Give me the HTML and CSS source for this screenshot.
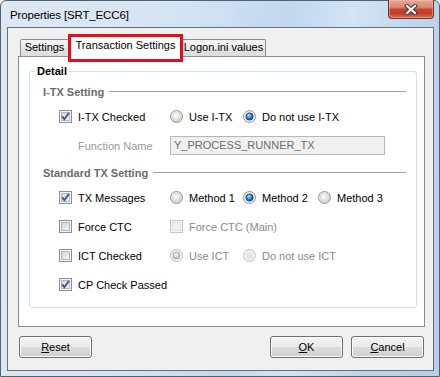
FILE: index.html
```html
<!DOCTYPE html>
<html>
<head>
<meta charset="utf-8">
<link rel="stylesheet" href="styles.css">
</head>
<body>
<svg class="defs" width="0" height="0">
  <defs>
    <linearGradient id="cbg" x1="0" y1="0" x2="1" y2="1">
      <stop offset="0" stop-color="#cdd1d7"/>
      <stop offset="1" stop-color="#f8f8f8"/>
    </linearGradient>
    <radialGradient id="rbg" cx=".4" cy=".35" r=".75">
      <stop offset="0" stop-color="#fafafa"/>
      <stop offset=".6" stop-color="#e2e2e2"/>
      <stop offset="1" stop-color="#c4c4c4"/>
    </radialGradient>
    <radialGradient id="rdot" cx=".4" cy=".35" r=".7">
      <stop offset="0" stop-color="#b9e6fb"/>
      <stop offset=".5" stop-color="#2a8ed0"/>
      <stop offset="1" stop-color="#0f4a7e"/>
    </radialGradient>
    <radialGradient id="rdotdis" cx=".4" cy=".35" r=".7">
      <stop offset="0" stop-color="#f2f2f2"/>
      <stop offset="1" stop-color="#b8b8b8"/>
    </radialGradient>
    <symbol id="cb" viewBox="0 0 13 13">
      <rect x=".5" y=".5" width="12" height="12" fill="#f6f6f6" stroke="#8e8f8f"/>
      <rect x="2.5" y="2.5" width="8" height="8" fill="url(#cbg)" stroke="#b3b7bd"/>
    </symbol>
    <symbol id="cbon" viewBox="0 0 13 13">
      <rect x=".5" y=".5" width="12" height="12" fill="#f6f6f6" stroke="#8e8f8f"/>
      <rect x="2.5" y="2.5" width="8" height="8" fill="url(#cbg)" stroke="#b3b7bd"/>
      <path d="M3.2 6.4 L5.4 9.3 L9.8 2.9" fill="none" stroke="#40558f" stroke-width="1.8"/>
    </symbol>
    <symbol id="cbdis" viewBox="0 0 13 13">
      <rect x=".5" y=".5" width="12" height="12" fill="#f4f4f4" stroke="#c6c6c6"/>
      <rect x="2.5" y="2.5" width="8" height="8" fill="#f0f0f0" stroke="#e0e0e0"/>
    </symbol>
    <symbol id="rb" viewBox="0 0 13 13">
      <circle cx="6.5" cy="6.5" r="6" fill="url(#rbg)" stroke="#979797"/>
      <circle cx="6.5" cy="6.5" r="4" fill="none" stroke="#d0d0d0" stroke-width=".8"/>
    </symbol>
    <symbol id="rbon" viewBox="0 0 13 13">
      <circle cx="6.5" cy="6.5" r="6" fill="#ececec" stroke="#979797"/>
      <circle cx="6.5" cy="6.5" r="3.6" fill="url(#rdot)" stroke="#1e3f63" stroke-width=".9"/>
    </symbol>
    <symbol id="rbdison" viewBox="0 0 13 13">
      <circle cx="6.5" cy="6.5" r="6" fill="#f1f1f1" stroke="#bdbdbd"/>
      <circle cx="6.5" cy="6.5" r="3.5" fill="url(#rdotdis)" stroke="#a5a5a5" stroke-width=".9"/>
    </symbol>
    <symbol id="rbdis" viewBox="0 0 13 13">
      <circle cx="6.5" cy="6.5" r="6" fill="#f3f3f3" stroke="#c4c4c4"/>
      <circle cx="6.5" cy="6.5" r="3.8" fill="#e6e6e6"/>
    </symbol>
  </defs>
</svg>

<div class="window">
  <div class="titlebar">
    <span class="title">Properties [SRT_ECC6]</span>
    <div class="close">
      <svg width="14" height="11" viewBox="0 0 14 11">
        <path d="M3 2 L11 9 M11 2 L3 9" stroke="#3b3b3b" stroke-width="4.2" stroke-linecap="square" fill="none"/>
        <path d="M3 2 L11 9 M11 2 L3 9" stroke="#ffffff" stroke-width="2.2" stroke-linecap="square" fill="none"/>
      </svg>
    </div>
  </div>

  <div class="client">
    <div class="tabs">
      <div class="tab t-settings">Settings</div>
      <div class="tab active">Transaction Settings</div>
      <div class="tab t-logon">Logon.ini values</div>
    </div>

    <div class="panel">
      <fieldset class="group">
        <legend>Detail</legend>

        <div class="section"><span>I-TX Setting</span><i class="rule"></i></div>
        <div class="row">
          <label class="cell c1"><svg class="ctl"><use href="#cbon"/></svg>I-TX Checked</label>
          <label class="cell c2"><svg class="ctl"><use href="#rb"/></svg>Use I-TX</label>
          <label class="cell"><svg class="ctl"><use href="#rbon"/></svg>Do not use I-TX</label>
        </div>
        <div class="row">
          <span class="cell c1 fname">Function Name</span>
          <div class="textbox">Y_PROCESS_RUNNER_TX</div>
        </div>

        <div class="section s2"><span>Standard TX Setting</span><i class="rule"></i></div>
        <div class="row">
          <label class="cell c1"><svg class="ctl"><use href="#cbon"/></svg>TX Messages</label>
          <label class="cell c2"><svg class="ctl"><use href="#rb"/></svg>Method 1</label>
          <label class="cell c3"><svg class="ctl"><use href="#rbon"/></svg>Method 2</label>
          <label class="cell"><svg class="ctl"><use href="#rb"/></svg>Method 3</label>
        </div>
        <div class="row">
          <label class="cell c1"><svg class="ctl"><use href="#cb"/></svg>Force CTC</label>
          <label class="cell dis"><svg class="ctl"><use href="#cbdis"/></svg>Force CTC (Main)</label>
        </div>
        <div class="row">
          <label class="cell c1"><svg class="ctl"><use href="#cb"/></svg>ICT Checked</label>
          <label class="cell c2 dis"><svg class="ctl"><use href="#rbdison"/></svg>Use ICT</label>
          <label class="cell dis"><svg class="ctl"><use href="#rbdis"/></svg>Do not use ICT</label>
        </div>
        <div class="row">
          <label class="cell c1 wide"><svg class="ctl"><use href="#cbon"/></svg>CP Check Passed</label>
        </div>
      </fieldset>
    </div>

    <div class="buttons">
      <button class="btn reset"><u>R</u>eset</button>
      <button class="btn"><u>O</u>K</button>
      <button class="btn"><u>C</u>ancel</button>
    </div>
  </div>
</div>
</body>
</html>
```

FILE: styles.css
```css
* { box-sizing: border-box; }

html, body {
  margin: 0;
  padding: 0;
  background: #ffffff;
}

body {
  font-family: "Liberation Sans", Arial, sans-serif;
  font-size: 11px;
  color: #000;
  width: 440px;
  height: 377px;
  overflow: hidden;
}

.defs {
  position: absolute;
  width: 0;
  height: 0;
}

.window {
  width: 440px;
  height: 377px;
  border: 1px solid #55616e;
  border-radius: 6px 6px 0 0;
  background: linear-gradient(100deg, #dde8f4 0%, #d5e4f3 35%, #c2d8ef 58%, #d3e3f4 70%, #bcd3ec 86%, #b7cfea 100%);
  padding: 0 5px 5px 6px;
  display: flex;
  flex-direction: column;
}

.titlebar {
  height: 26px;
  display: flex;
  align-items: flex-start;
  flex: none;
}

.title {
  padding-left: 3px;
  margin-top: 7px;
  line-height: 14px;
  font-size: 11.5px;
  letter-spacing: -0.15px;
  color: #000;
}

.close {
  margin-left: auto;
  margin-top: -1px;
  width: 46px;
  height: 19px;
  border: 1px solid #6e3128;
  border-top: none;
  border-radius: 0 0 4px 4px;
  background: linear-gradient(#e7a695 0%, #d98a76 40%, #c7432c 52%, #c53c27 75%, #e06b50 100%);
  box-shadow: inset 0 0 0 1px rgba(255, 200, 190, 0.45);
  display: flex;
  align-items: center;
  justify-content: center;
}

.client {
  flex: 1;
  background: #f0f0f0;
  border: 1px solid #66717e;
  padding: 8px 8px 0 10px;
  display: flex;
  flex-direction: column;
}

/* Tabs */
.tabs {
  display: flex;
  align-items: flex-end;
  height: 20px;
  padding-left: 2px;
  flex: none;
}

.tab {
  height: 17px;
  line-height: 15px;
  border: 1px solid #898c95;
  border-bottom: none;
  border-radius: 2px 2px 0 0;
  background: linear-gradient(#f4f4f4, #ececec 50%, #e4e4e4 50%, #dcdcdc);
  text-align: center;
  white-space: nowrap;
}

.t-settings { width: 49px; }
.t-logon { width: 85px; }

.tab.active {
  position: relative;
  z-index: 2;
  width: 111px;
  height: 21px;
  line-height: 17px;
  margin-left: 1px;
  margin-bottom: -1px;
  background: #ffffff;
}

.tab.active::after {
  content: "";
  position: absolute;
  left: -3px;
  right: -3px;
  top: -3px;
  bottom: -5px;
  border: 3px solid #e3101a;
}

/* Panel */
.panel {
  height: 271px;
  flex: none;
  background: #ffffff;
  border: 1px solid #898c95;
  padding: 7px 7px 0 10px;
}

.group {
  margin: 0;
  width: 388px;
  height: 244px;
  min-width: 0;
  border: 1px solid #d5dfe5;
  border-radius: 3px;
  padding: 3px 10px 0 5px;
}

.group legend {
  padding: 0 2px;
  font-weight: bold;
  line-height: 14px;
}

.section {
  display: flex;
  align-items: center;
  height: 21px;
  padding-left: 8px;
  font-weight: bold;
  color: #6b6b6b;
  white-space: nowrap;
}

.section.s2 { margin-top: 2px; }

.rule {
  flex: 1;
  height: 1px;
  margin-left: 5px;
  background: #a0a0a0;
}

.row {
  display: flex;
  align-items: center;
  height: 29px;
  padding-left: 24px;
}

.cell {
  display: flex;
  align-items: center;
  white-space: nowrap;
}

.c1 { width: 111px; }
.c2 { width: 73px; }
.c3 { width: 75px; }
.wide { width: auto; }

.ctl {
  width: 13px;
  height: 13px;
  flex: none;
  margin-right: 6px;
}

.dis { color: #8a8a8a; }

.fname {
  padding-left: 19px;
  color: #9a9a9a;
}

.textbox {
  width: 215px;
  height: 19px;
  border: 1px solid #b4b7bd;
  background: #f0f0f0;
  color: #6d6d6d;
  padding-left: 3px;
  line-height: 17px;
}

/* Buttons */
.buttons {
  display: flex;
  gap: 8px;
  margin-top: 9px;
  padding: 0 1px;
}

.btn {
  width: 73px;
  height: 22px;
  padding: 0;
  border: 1px solid #707070;
  border-radius: 3px;
  background: linear-gradient(#f2f2f2 0%, #ebebeb 50%, #dddddd 50%, #cfcfcf 100%);
  box-shadow: inset 0 0 0 1px #fbfbfb;
  font-family: "Liberation Sans", Arial, sans-serif;
  font-size: 11px;
  color: #000;
}

.btn.reset { margin-right: auto; }
```
